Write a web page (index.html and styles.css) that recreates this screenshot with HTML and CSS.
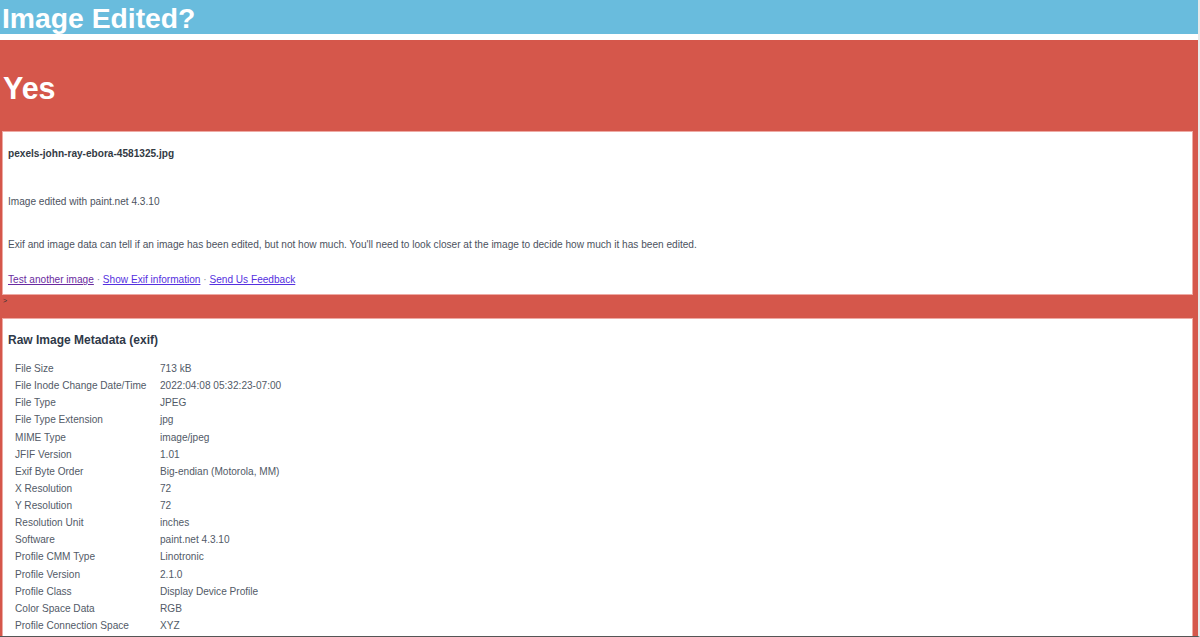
FILE: index.html
```html
<!DOCTYPE html>
<html>
<head>
<meta charset="utf-8">
<link rel="stylesheet" href="styles.css">
</head>
<body>
<div class="page">
  <header class="topbar"><h1 class="title">Image Edited?</h1></header>
  <section class="result">
    <div class="verdict">Yes</div>
    <div class="card summary">
      <p class="filename">pexels-john-ray-ebora-4581325.jpg</p>
      <p class="edited">Image edited with paint.net 4.3.10</p>
      <p class="note">Exif and image data can tell if an image has been edited, but not how much. You'll need to look closer at the image to decide how much it has been edited.</p>
      <p class="links"><a class="visited" href="#">Test another image</a> · <a href="#">Show Exif information</a> · <a href="#">Send Us Feedback</a></p>
    </div>
    <div class="stray">&gt;</div>
    <div class="card meta">
      <h2 class="meta-title">Raw Image Metadata (exif)</h2>
      <table class="meta-table">
        <tr><td>File Size</td><td>713 kB</td></tr>
        <tr><td>File Inode Change Date/Time</td><td>2022:04:08 05:32:23-07:00</td></tr>
        <tr><td>File Type</td><td>JPEG</td></tr>
        <tr><td>File Type Extension</td><td>jpg</td></tr>
        <tr><td>MIME Type</td><td>image/jpeg</td></tr>
        <tr><td>JFIF Version</td><td>1.01</td></tr>
        <tr><td>Exif Byte Order</td><td>Big-endian (Motorola, MM)</td></tr>
        <tr><td>X Resolution</td><td>72</td></tr>
        <tr><td>Y Resolution</td><td>72</td></tr>
        <tr><td>Resolution Unit</td><td>inches</td></tr>
        <tr><td>Software</td><td>paint.net 4.3.10</td></tr>
        <tr><td>Profile CMM Type</td><td>Linotronic</td></tr>
        <tr><td>Profile Version</td><td>2.1.0</td></tr>
        <tr><td>Profile Class</td><td>Display Device Profile</td></tr>
        <tr><td>Color Space Data</td><td>RGB</td></tr>
        <tr><td>Profile Connection Space</td><td>XYZ</td></tr>
      </table>
    </div>
  </section>
</div>
</body>
</html>
```

FILE: styles.css
```css
html, body {
  margin: 0;
  padding: 0;
  height: 637px;
  overflow: hidden;
  background: #ffffff;
  font-family: "Liberation Sans", Arial, sans-serif;
}

.page {
  width: 1198px;
  height: 636px;
  overflow: hidden;
  border-right: 2px solid #e9e9e9;
  border-bottom: 1px solid #555555;
}

.topbar {
  background: #69bcdd;
  height: 34px;
  margin-bottom: 6px;
}

.title {
  margin: 0;
  padding-left: 2px;
  height: 34px;
  font-size: 28.3px;
  line-height: 36px;
  font-weight: bold;
  color: #ffffff;
  white-space: nowrap;
}

.result {
  background: #d5574b;
  padding: 0 5px 0 2px;
}

.verdict {
  height: 91px;
  box-sizing: border-box;
  padding-top: 5px;
  padding-left: 1px;
  font-size: 30.5px;
  font-weight: bold;
  color: #ffffff;
  line-height: 30px;
  display: flex;
  align-items: center;
}

.card {
  background: #ffffff;
  border: 1px solid #eeaaa4;
  padding: 0 6px 0 5px;
}

.summary {
  height: 162px;
  font-size: 10.1px;
  line-height: 14px;
  color: #4c525e;
}

.summary p {
  margin: 0;
}

.summary .filename {
  margin-top: 15px;
  font-weight: bold;
  color: #333a44;
}

.summary .edited {
  margin-top: 34px;
}

.summary .note {
  margin-top: 29px;
}

.summary .links {
  margin-top: 21px;
  color: #8a8f99;
}

.links a {
  color: #5530e0;
  text-decoration: underline;
}

.links a.visited {
  color: #6a2aa0;
}

.stray {
  height: 23px;
  font-size: 7px;
  line-height: 12px;
  color: #333333;
  padding-left: 1px;
}

.meta {
  min-height: 400px;
}

.meta-title {
  margin: 13px 0 0 0;
  font-size: 12px;
  line-height: 16px;
  font-weight: bold;
  color: #2f3948;
}

.meta-table {
  margin-top: 12px;
  margin-left: 5px;
  border-collapse: collapse;
  font-size: 10.1px;
  color: #525a67;
}

.meta-table td {
  padding: 0 0 0 2px;
  height: 17.13px;
  line-height: 17.13px;
  white-space: nowrap;
}

.meta-table td:first-child {
  width: 143px;
}
```
